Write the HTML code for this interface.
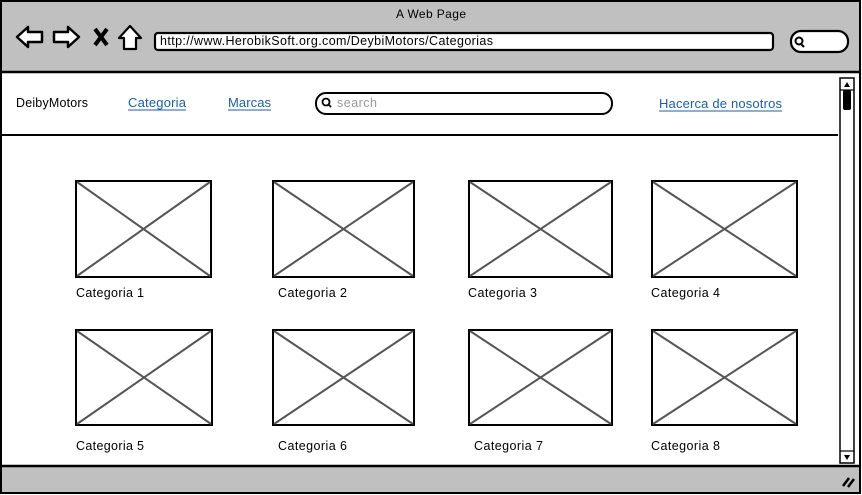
<!DOCTYPE html>
<html><head><meta charset="utf-8"><style>
html,body{margin:0;padding:0;background:#fff;width:862px;height:495px;overflow:hidden}
svg text{font-family:"Liberation Sans",sans-serif}
</style></head><body>
<svg width="862" height="495" viewBox="0 0 862 495" xmlns="http://www.w3.org/2000/svg">
<rect x="1" y="1" width="859" height="492" fill="#fff" stroke="#000" stroke-width="2"/>
<rect x="2" y="2" width="857" height="70" fill="#c0c0c0"/>
<line x1="1" y1="72" x2="861" y2="72" stroke="#000" stroke-width="2.5"/>
<text x="396" y="18" font-size="12" textLength="70" fill="#000">A Web Page</text>
<path d="M17 37 L28 27 L28 32 L42 32 L42 42 L28 42 L28 47 Z" fill="#fff" stroke="#000" stroke-width="2.5" stroke-linejoin="round"/>
<path d="M79 37 L68 27 L68 32 L54 32 L54 42 L68 42 L68 47 Z" fill="#fff" stroke="#000" stroke-width="2.5" stroke-linejoin="round"/>
<path d="M95 29 L107 45 M107 29 L95 45" stroke="#000" stroke-width="4"/>
<path d="M119 38 L130 26 L141 38 L136 38 L136 49 L124 49 L124 38 Z" fill="#fff" stroke="#000" stroke-width="2.2" stroke-linejoin="round"/>
<rect x="155" y="33" width="618" height="17" rx="3" fill="#fff" stroke="#000" stroke-width="2.2"/>
<text x="160" y="45" font-size="12.5" textLength="333" fill="#000">http://www.HerobikSoft.org.com/DeybiMotors/Categorias</text>
<rect x="791" y="31" width="57" height="21" rx="10" fill="#fff" stroke="#000" stroke-width="2.2"/>
<circle cx="799" cy="41" r="3.5" fill="none" stroke="#000" stroke-width="2"/>
<line x1="801" y1="44" x2="804" y2="47" stroke="#000" stroke-width="2"/>
<text x="16" y="107" font-size="12.5" textLength="72" fill="#000">DeibyMotors</text>
<text x="128" y="107" font-size="13" textLength="58" fill="#1a5fa8">Categoria</text>
<line x1="128" y1="110" x2="186" y2="110" stroke="#1a5fa8"/>
<text x="228" y="107" font-size="13" textLength="43" fill="#1a5fa8">Marcas</text>
<line x1="228" y1="110" x2="271" y2="110" stroke="#1a5fa8"/>
<rect x="316" y="93" width="296" height="21" rx="10" fill="#fff" stroke="#000" stroke-width="2"/>
<circle cx="326" cy="102" r="3.5" fill="none" stroke="#000" stroke-width="1.8"/>
<line x1="328.5" y1="104.5" x2="331" y2="107" stroke="#000" stroke-width="1.8"/>
<text x="337" y="107" font-size="12.5" textLength="40" fill="#999">search</text>
<text x="659" y="108" font-size="13" textLength="123" fill="#1a5fa8">Hacerca de nosotros</text>
<line x1="659" y1="111" x2="782" y2="111" stroke="#1a5fa8"/>
<line x1="2" y1="135" x2="838" y2="135" stroke="#000" stroke-width="2"/>
<rect x="840" y="78" width="14" height="385" fill="#fff" stroke="#000" stroke-width="1.5"/>
<line x1="840" y1="90" x2="854" y2="90" stroke="#000" stroke-width="1.2"/>
<path d="M844 87 L847 82 L850 87 Z" fill="#000"/>
<rect x="843" y="90" width="8" height="20" rx="2" fill="#000"/>
<line x1="840" y1="451" x2="854" y2="451" stroke="#000" stroke-width="1.2"/>
<path d="M844 455 L847 460 L850 455 Z" fill="#000"/>
<rect x="2" y="466" width="857" height="26" fill="#c0c0c0"/>
<line x1="1" y1="466" x2="861" y2="466" stroke="#000" stroke-width="2.5"/>
<path d="M843 486 L849 478 M848 487 L854 479" stroke="#000" stroke-width="2.5"/>
<g fill="#fff" stroke="#000" stroke-width="2">
<rect x="76" y="181" width="135" height="96"/>
<rect x="273" y="181" width="141" height="96"/>
<rect x="469" y="181" width="143" height="96"/>
<rect x="652" y="181" width="145" height="96"/>
<rect x="76" y="330" width="136" height="95"/>
<rect x="273" y="330" width="141" height="95"/>
<rect x="469" y="330" width="143" height="95"/>
<rect x="652" y="330" width="145" height="95"/>
</g>
<g stroke="#555" stroke-width="2">
<path d="M77 182 L210 276 M210 182 L77 276"/>
<path d="M274 182 L413 276 M413 182 L274 276"/>
<path d="M470 182 L611 276 M611 182 L470 276"/>
<path d="M653 182 L796 276 M796 182 L653 276"/>
<path d="M77 331 L211 424 M211 331 L77 424"/>
<path d="M274 331 L413 424 M413 331 L274 424"/>
<path d="M470 331 L611 424 M611 331 L470 424"/>
<path d="M653 331 L796 424 M796 331 L653 424"/>
</g>
<g font-size="12.5" fill="#000">
<text x="76" y="297" textLength="68">Categoria 1</text>
<text x="278" y="297" textLength="69">Categoria 2</text>
<text x="468" y="297" textLength="69">Categoria 3</text>
<text x="651" y="297" textLength="69">Categoria 4</text>
<text x="76" y="450" textLength="68">Categoria 5</text>
<text x="278" y="450" textLength="69">Categoria 6</text>
<text x="474" y="450" textLength="69">Categoria 7</text>
<text x="651" y="450" textLength="69">Categoria 8</text>
</g>
</svg>
</body></html>
